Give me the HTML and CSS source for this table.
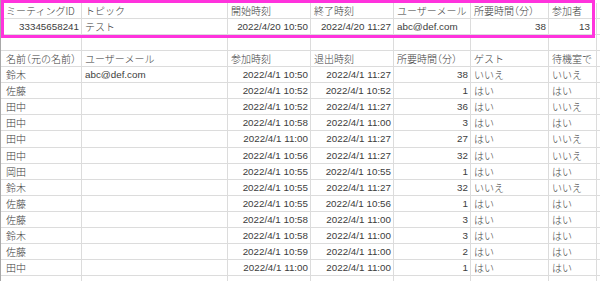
FILE: index.html
```html
<!DOCTYPE html>
<html lang="ja">
<head>
<meta charset="utf-8">
<link rel="stylesheet" href="styles.css">
</head>
<body>
<div class="wrap">
  <div class="sheet">
    <div class="c">ミーティングID</div><div class="c">トピック</div><div class="c">開始時刻</div><div class="c">終了時刻</div><div class="c">ユーザーメール</div><div class="c">所要時間<span class="p">（</span>分<span class="p">）</span></div><div class="c">参加者</div><div class="c"></div>
    <div class="c r lat">33345658241</div><div class="c">テスト</div><div class="c r lat">2022/4/20 10:50</div><div class="c r lat">2022/4/20 11:27</div><div class="c lat">abc@def.com</div><div class="c r lat">38</div><div class="c r lat">13</div><div class="c"></div>
    <div class="c"></div><div class="c"></div><div class="c"></div><div class="c"></div><div class="c"></div><div class="c"></div><div class="c"></div><div class="c"></div>
    <div class="c">名前<span class="p">（</span>元の名前<span class="p">）</span></div><div class="c">ユーザーメール</div><div class="c">参加時刻</div><div class="c">退出時刻</div><div class="c">所要時間<span class="p">（</span>分<span class="p">）</span></div><div class="c">ゲスト</div><div class="c">待機室で</div><div class="c"></div>
    <div class="c">鈴木</div><div class="c lat">abc@def.com</div><div class="c r lat">2022/4/1 10:50</div><div class="c r lat">2022/4/1 11:27</div><div class="c r lat">38</div><div class="c">いいえ</div><div class="c">いいえ</div><div class="c"></div>
    <div class="c">佐藤</div><div class="c"></div><div class="c r lat">2022/4/1 10:52</div><div class="c r lat">2022/4/1 10:52</div><div class="c r lat">1</div><div class="c">はい</div><div class="c">はい</div><div class="c"></div>
    <div class="c">田中</div><div class="c"></div><div class="c r lat">2022/4/1 10:52</div><div class="c r lat">2022/4/1 11:27</div><div class="c r lat">36</div><div class="c">はい</div><div class="c">いいえ</div><div class="c"></div>
    <div class="c">田中</div><div class="c"></div><div class="c r lat">2022/4/1 10:58</div><div class="c r lat">2022/4/1 11:00</div><div class="c r lat">3</div><div class="c">はい</div><div class="c">はい</div><div class="c"></div>
    <div class="c">田中</div><div class="c"></div><div class="c r lat">2022/4/1 11:00</div><div class="c r lat">2022/4/1 11:27</div><div class="c r lat">27</div><div class="c">はい</div><div class="c">いいえ</div><div class="c"></div>
    <div class="c">田中</div><div class="c"></div><div class="c r lat">2022/4/1 10:56</div><div class="c r lat">2022/4/1 11:27</div><div class="c r lat">32</div><div class="c">はい</div><div class="c">いいえ</div><div class="c"></div>
    <div class="c">岡田</div><div class="c"></div><div class="c r lat">2022/4/1 10:55</div><div class="c r lat">2022/4/1 10:55</div><div class="c r lat">1</div><div class="c">はい</div><div class="c">はい</div><div class="c"></div>
    <div class="c">鈴木</div><div class="c"></div><div class="c r lat">2022/4/1 10:55</div><div class="c r lat">2022/4/1 11:27</div><div class="c r lat">32</div><div class="c">いいえ</div><div class="c">いいえ</div><div class="c"></div>
    <div class="c">佐藤</div><div class="c"></div><div class="c r lat">2022/4/1 10:55</div><div class="c r lat">2022/4/1 10:56</div><div class="c r lat">1</div><div class="c">はい</div><div class="c">はい</div><div class="c"></div>
    <div class="c">佐藤</div><div class="c"></div><div class="c r lat">2022/4/1 10:58</div><div class="c r lat">2022/4/1 11:00</div><div class="c r lat">3</div><div class="c">はい</div><div class="c">はい</div><div class="c"></div>
    <div class="c">鈴木</div><div class="c"></div><div class="c r lat">2022/4/1 10:58</div><div class="c r lat">2022/4/1 11:00</div><div class="c r lat">3</div><div class="c">はい</div><div class="c">はい</div><div class="c"></div>
    <div class="c">佐藤</div><div class="c"></div><div class="c r lat">2022/4/1 10:59</div><div class="c r lat">2022/4/1 11:00</div><div class="c r lat">2</div><div class="c">はい</div><div class="c">はい</div><div class="c"></div>
    <div class="c">田中</div><div class="c"></div><div class="c r lat">2022/4/1 11:00</div><div class="c r lat">2022/4/1 11:00</div><div class="c r lat">1</div><div class="c">はい</div><div class="c">はい</div><div class="c"></div>
    <div class="c"></div><div class="c"></div><div class="c"></div><div class="c"></div><div class="c"></div><div class="c"></div><div class="c"></div><div class="c"></div>
  </div>
  <div class="highlight"></div>
</div>
</body>
</html>
```
FILE: styles.css
```css
html, body {
  margin: 0;
  padding: 0;
  background: #ffffff;
  overflow: hidden;
}
body {
  width: 600px;
  height: 281px;
}
.wrap {
  position: relative;
  width: 600px;
  height: 281px;
  overflow: hidden;
}
.sheet {
  display: grid;
  grid-template-columns: 81px 146px 83px 83px 77px 78px 48px 1fr;
  grid-auto-rows: 16.1px;
  padding-top: 2.7px;
  border-left: 1px solid #a8a8a8;
  font-family: "Noto Sans CJK JP", sans-serif;
  font-size: 10px;
  font-weight: 300;
  color: #3c3c3c;
}
.c {
  box-sizing: border-box;
  border-right: 1px solid #dcdcdc;
  border-bottom: 1px solid #dcdcdc;
  padding: 0 2px 0 3px;
  line-height: 15px;
  white-space: nowrap;
  overflow: hidden;
}
.sheet > .c:nth-child(8n+1) {
  padding-left: 5px;
}
.sheet > .c:nth-child(8n+7).r {
  padding-right: 6px;
}
.r {
  text-align: right;
}
.lat {
  font-family: "Liberation Sans", "Noto Sans CJK JP", sans-serif;
  font-weight: 400;
  font-size: 9.8px;
}
.p {
  font-feature-settings: "halt";
}
.highlight {
  position: absolute;
  left: 1px;
  top: 0;
  width: 594px;
  height: 38px;
  box-sizing: border-box;
  border: 3px solid #ff33dd;
}
```
